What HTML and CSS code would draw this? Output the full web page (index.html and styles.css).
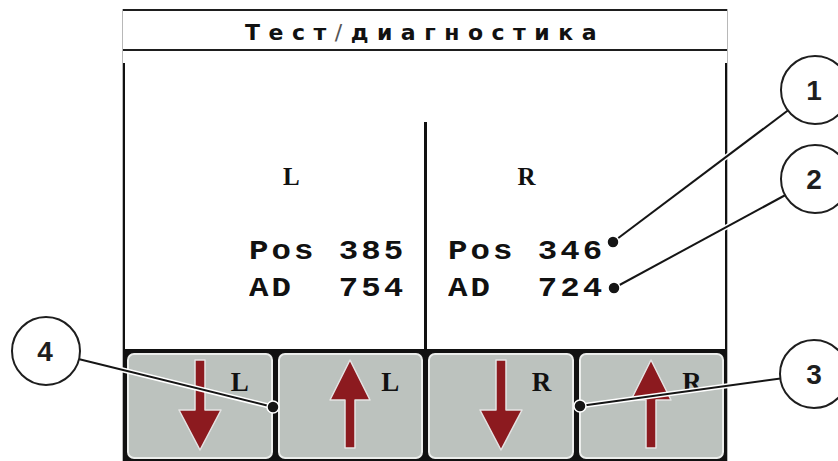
FILE: index.html
```html
<!DOCTYPE html>
<html lang="ru">
<head>
  <meta charset="UTF-8">
  <title>Тест/диагностика</title>
  <link rel="stylesheet" href="styles.css">
</head>
<body>
  <div class="screen">
    <div class="title">Тест<span class="slash">/</span>диагностика</div>
    <div class="gap"></div>

    <div class="body">
      <div class="side side-left">
        <div class="side-name">L</div>
        <div class="val">Pos 385</div>
        <div class="val">AD  754</div>
      </div>
      <div class="divider"></div>
      <div class="side side-right">
        <div class="side-name">R</div>
        <div class="val">Pos 346</div>
        <div class="val">AD  724</div>
      </div>
    </div>

    <div class="keys">
      <div class="key">
        <svg class="arrow" viewBox="0 0 44 92"><polygon points="17,1 27,1 27,51 43,51 22,91 1,51 17,51"/></svg>
        <span class="key-label">L</span>
      </div>
      <div class="key">
        <svg class="arrow" viewBox="0 0 44 92"><polygon points="22,1 42,41 27,41 27,89 17,89 17,41 2,41"/></svg>
        <span class="key-label">L</span>
      </div>
      <div class="key">
        <svg class="arrow" viewBox="0 0 44 92"><polygon points="17,1 27,1 27,51 43,51 22,91 1,51 17,51"/></svg>
        <span class="key-label">R</span>
      </div>
      <div class="key">
        <svg class="arrow" viewBox="0 0 44 92"><polygon points="22,1 42,41 27,41 27,89 17,89 17,41 2,41"/></svg>
        <span class="key-label">R</span>
      </div>
    </div>
  </div>

  <!-- callouts lie over the screen -->
  <svg class="callouts" width="838" height="461" viewBox="0 0 838 461">
    <g class="lead-halo">
      <line x1="613" y1="242" x2="815" y2="90"/>
      <line x1="614" y1="288" x2="815" y2="179"/>
      <line x1="273" y1="407" x2="46" y2="351"/>
      <line x1="580" y1="406" x2="814" y2="374"/>
    </g>
    <g class="lead">
      <line x1="613" y1="242" x2="815" y2="90"/>
      <line x1="614" y1="288" x2="815" y2="179"/>
      <line x1="273" y1="407" x2="46" y2="351"/>
      <line x1="580" y1="406" x2="814" y2="374"/>
    </g>
    <g class="bubble">
      <circle cx="815" cy="90" r="34"/>
      <circle cx="815" cy="179" r="34"/>
      <circle cx="814" cy="374" r="34"/>
      <circle cx="46" cy="351" r="34"/>
    </g>
    <g class="num">
      <text x="814" y="100">1</text>
      <text x="814" y="189">2</text>
      <text x="814" y="384">3</text>
      <text x="45" y="361">4</text>
    </g>
    <g class="dot">
      <circle cx="613" cy="242" r="6"/>
      <circle cx="614" cy="288" r="6"/>
      <circle cx="273" cy="407" r="6"/>
      <circle cx="580" cy="406" r="6"/>
    </g>
  </svg>
</body>
</html>
```

FILE: styles.css
```css
body {
  margin: 0;
  background: #fff;
  color: #111;
  font-family: "DejaVu Sans", sans-serif;
}

.screen {
  width: 604px;
  margin: 9px 0 0 122px;
  border-left: 1px solid #b8b8b8;
  border-right: 1px solid #b8b8b8;
}

.title {
  height: 34px;
  padding-top: 4px;
  border-top: 2px solid #1e1e1e;
  border-bottom: 2px solid #1e1e1e;
  text-align: center;
  font-size: 22px;
  font-weight: bold;
  line-height: 35px;
  letter-spacing: 8.5px;
}

.title .slash {
  font-weight: normal;
  color: #555;
}

.gap {
  height: 12px;
}

.body {
  display: grid;
  grid-template-columns: 1fr 3px 1fr;
  height: 286px;
  border-left: 2px solid #111;
  border-right: 2px solid #111;
}

.divider {
  background: #111;
  margin-top: 59px;
}

.side {
  padding-top: 101px;
}

.side-left {
  padding-left: 124px;
}

.side-right {
  padding-left: 21px;
}

.side-name {
  font-family: "Liberation Serif", serif;
  font-weight: bold;
  font-size: 25px;
  line-height: 25px;
  margin-bottom: 45px;
}

.side-left .side-name {
  padding-left: 34px;
}

.side-right .side-name {
  padding-left: 70px;
}

.val {
  font-family: "Liberation Mono", monospace;
  font-weight: bold;
  font-size: 27px;
  line-height: 37px;
  letter-spacing: 2.5px;
  white-space: pre;
  transform: scaleX(1.2);
  transform-origin: left;
}

.keys {
  display: grid;
  grid-template-columns: repeat(4, 1fr);
  gap: 5px;
  padding: 4px 3px 2px 4px;
  background: #111;
}

.key {
  height: 102px;
  display: grid;
  grid-template-columns: 1fr 44px 1fr;
  background: #bcc2be;
  border: 2px solid #eceeec;
  border-radius: 7px;
}

.arrow {
  grid-column: 2;
  width: 44px;
  height: 92px;
  margin-top: 4px;
}

.arrow polygon {
  fill: #8c1a1f;
  stroke: #e4e4e4;
  stroke-width: 1.5;
  stroke-linejoin: round;
}

.key-label {
  grid-column: 3;
  padding: 14px 0 0 9px;
  font-family: "Liberation Serif", serif;
  font-weight: bold;
  font-size: 27px;
  line-height: 27px;
}

.callouts {
  position: absolute;
  top: 0;
  left: 0;
  pointer-events: none;
}

.lead-halo line {
  stroke: #fff;
  stroke-width: 5;
}

.lead line {
  stroke: #151515;
  stroke-width: 2;
}

.bubble circle {
  fill: #fff;
  stroke: #1e1e1e;
  stroke-width: 2;
}

.num text {
  font-family: "Liberation Sans", sans-serif;
  font-weight: bold;
  font-size: 28px;
  text-anchor: middle;
  fill: #1e1e1e;
}

.dot circle {
  fill: #151515;
  stroke: #fff;
  stroke-width: 1.5;
}
```
